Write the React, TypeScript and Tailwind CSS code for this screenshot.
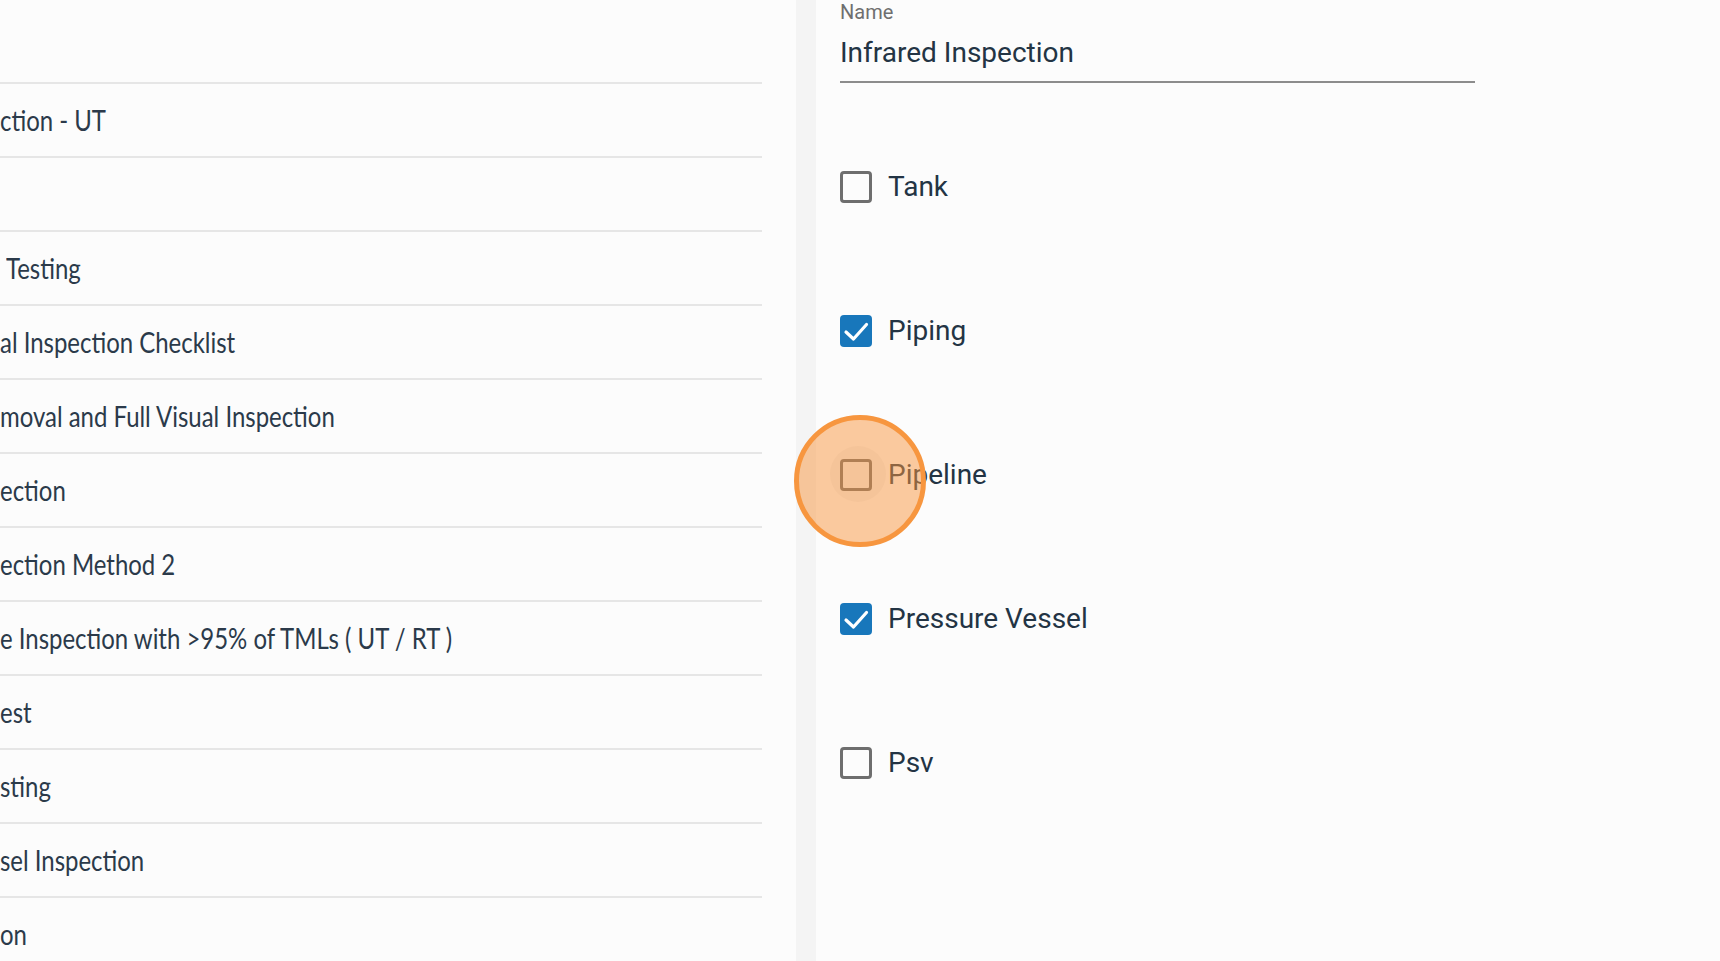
import React from "react";

const leftRows: { text: string; pad?: number }[] = [
  { text: "" },
  { text: "ction - UT" },
  { text: "" },
  { text: "Testing", pad: 6 },
  { text: "al Inspection Checklist" },
  { text: "moval and Full Visual Inspection" },
  { text: "ection" },
  { text: "ection Method 2" },
  { text: "e Inspection with >95% of TMLs ( UT / RT )" },
  { text: "est" },
  { text: "sting" },
  { text: "sel Inspection" },
  { text: "on" },
];

const options = [
  { label: "Tank", checked: false },
  { label: "Piping", checked: true },
  { label: "Pipeline", checked: false },
  { label: "Pressure Vessel", checked: true },
  { label: "Psv", checked: false },
];

function Checkbox({ checked }: { checked: boolean }) {
  if (checked) {
    return (
      <div className="w-[32px] h-[32px] rounded-[4px] bg-[#1877bb] flex items-center justify-center shrink-0">
        <svg width="32" height="32" viewBox="0 0 32 32">
          <polyline
            points="6,17 13.5,24 26.5,9.5"
            fill="none"
            stroke="#ffffff"
            strokeWidth="3.2"
            strokeLinecap="round"
            strokeLinejoin="round"
          />
        </svg>
      </div>
    );
  }
  return <div className="w-[32px] h-[32px] rounded-[4px] border-[3px] border-[#6e6e6e] shrink-0" />;
}

export default function App() {
  return (
    <div className="relative w-[1720px] h-[961px] overflow-hidden bg-[#fcfcfc] flex">
      <div className="w-[796px] shrink-0 pr-[34px] overflow-hidden">
        {leftRows.map((r, i) => (
          <div
            key={i}
            className={`${i === 0 ? "h-[84px]" : "h-[74px]"} border-b-2 border-[#e6e6e6] flex items-center whitespace-nowrap text-[28px] text-[#2b3a4a]`}
            style={{ fontFamily: "Lato, 'Open Sans', sans-serif", paddingLeft: r.pad ?? 0 }}
          >
            <span className="inline-block origin-left scale-x-[0.855]">{r.text}</span>
          </div>
        ))}
      </div>
      <div className="w-[20px] shrink-0 bg-[#f4f4f4]" />
      <div className="flex-1 pl-[24px]" style={{ fontFamily: "Roboto, 'Liberation Sans', sans-serif" }}>
        <div className="w-[635px]">
          <div className="text-[20px] leading-[22px] mt-[1px] text-[#6f6f6f]">Name</div>
          <div className="mt-[14px] text-[28px] leading-[32px] pb-[12px] border-b-2 border-[#8c8c8c] text-[#233444]">
            Infrared Inspection
          </div>
        </div>
        <div className="mt-[32px]">
          {options.map((o) => (
            <div key={o.label} className="h-[144px] flex items-center gap-[16px]">
              <Checkbox checked={o.checked} />
              <span className="text-[28px] leading-[32px] text-[#233444]">{o.label}</span>
            </div>
          ))}
        </div>
      </div>
      <div className="absolute left-[830px] top-[446px] w-[56px] h-[56px] rounded-full bg-[rgba(0,0,0,0.04)] pointer-events-none" />
      <div className="absolute left-[794px] top-[415px] w-[132px] h-[132px] rounded-full border-[5px] border-[#f7963f] bg-[rgba(247,150,63,0.5)] pointer-events-none" />
    </div>
  );
}
